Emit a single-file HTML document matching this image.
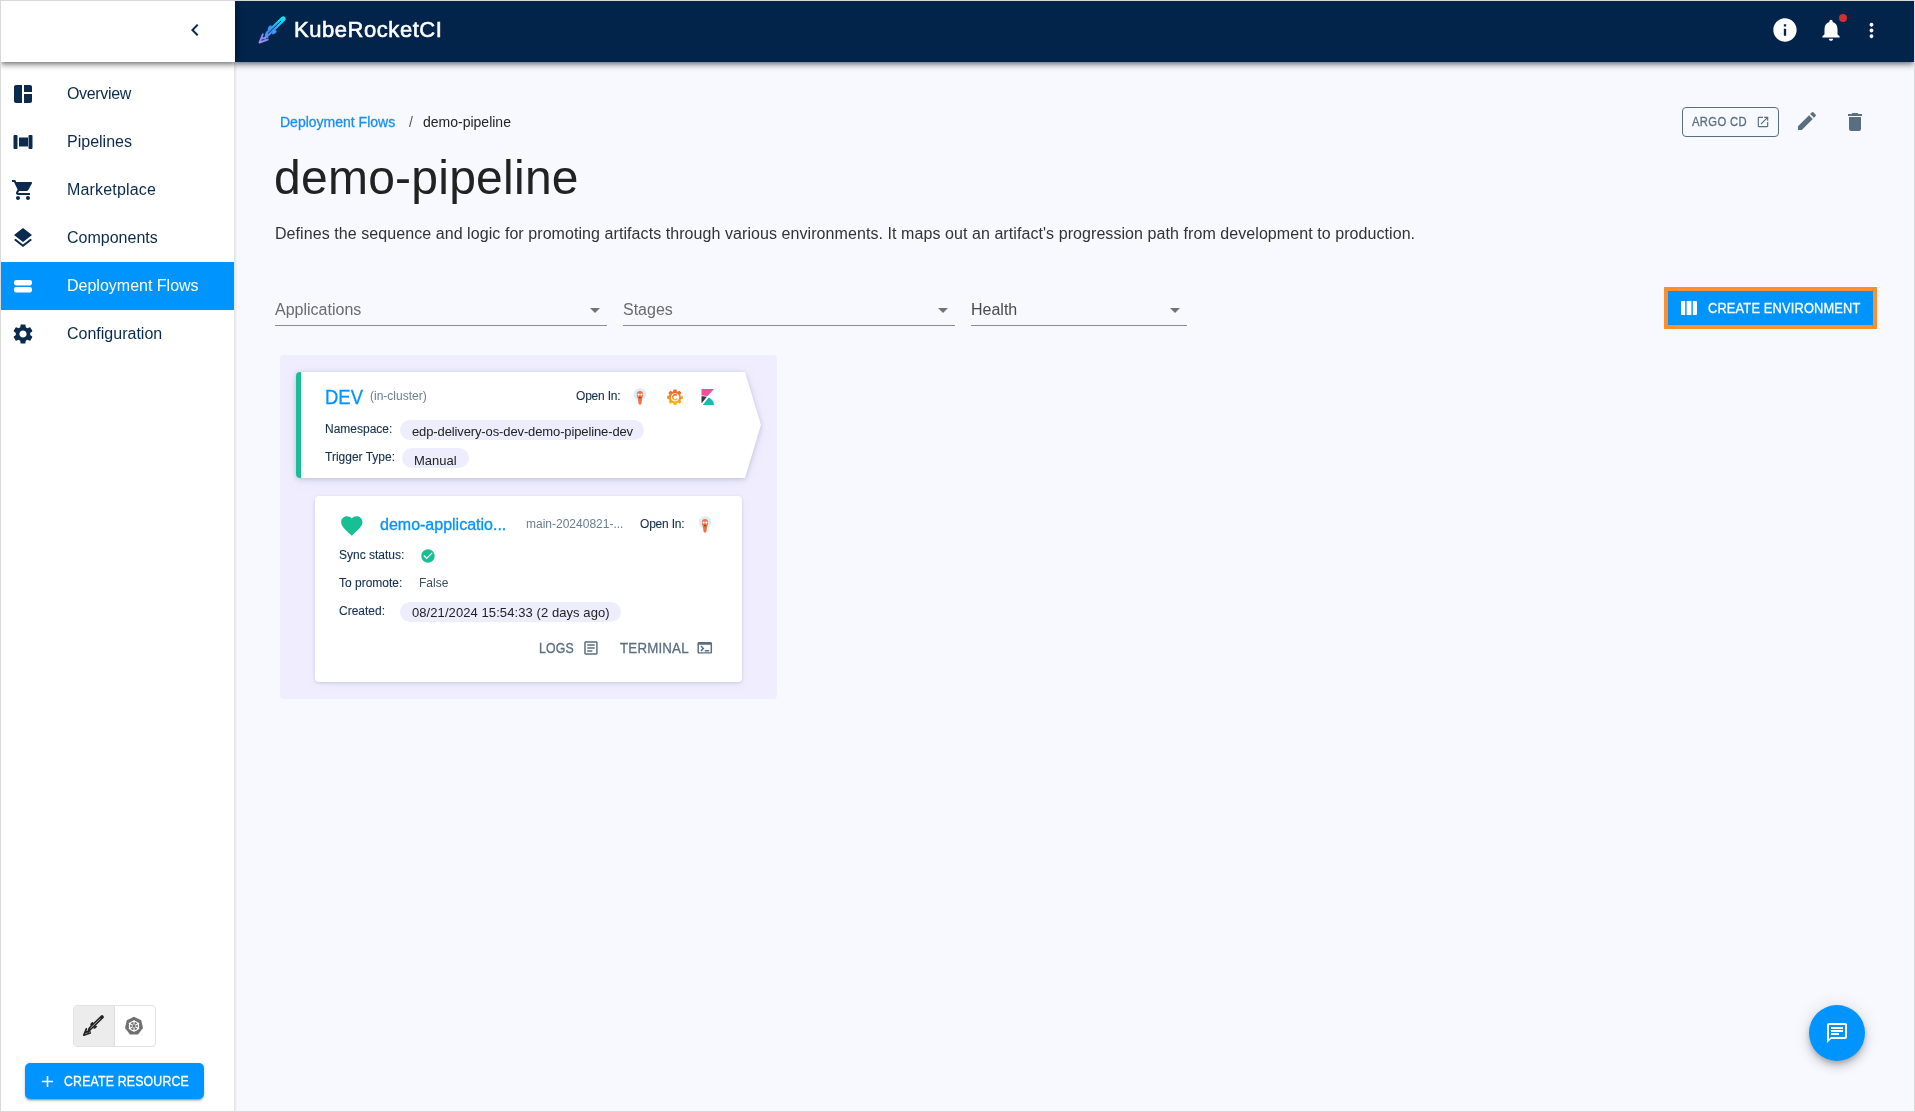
<!DOCTYPE html>
<html><head><meta charset="utf-8">
<style>
*{box-sizing:border-box;margin:0;padding:0}
html,body{width:1915px;height:1112px;overflow:hidden;background:#d9d9d9}
body{font-family:"Liberation Sans",sans-serif;position:relative}
.abs{position:absolute}
#frame{position:absolute;left:1px;top:1px;width:1913px;height:1110px;background:#f7f9fe;overflow:hidden;will-change:transform}
/* sidebar */
#side{position:absolute;left:0;top:0;width:234px;height:1110px;background:#fff;border-right:1px solid #e3e3e3}
#sidehead{position:absolute;left:0;top:0;width:234px;height:61px;background:#fff;box-shadow:0 2px 4px -1px rgba(0,5,20,.38),0 4px 5px 0 rgba(0,5,20,.2),0 1px 10px 0 rgba(0,5,20,.14);z-index:3}
.nav{position:absolute;left:0;width:233px;height:48px;color:#0a2a4e;font-size:16px}
.nav .t{position:absolute;left:66px;top:15px;white-space:nowrap}
.nav svg{position:absolute;left:10px;top:12px;width:24px;height:24px;fill:#0a2a4e}
.nav.active{background:#0094ff;color:#fff}
.nav.active svg{fill:#fff}
/* header */
#hdr{position:absolute;left:234px;top:0;width:1679px;height:61px;background:#02234a;box-shadow:0 2px 4px -1px rgba(0,5,20,.38),0 4px 5px 0 rgba(0,5,20,.2),0 1px 10px 0 rgba(0,5,20,.14);z-index:2}
.tx{position:absolute;white-space:nowrap}
.med{-webkit-text-stroke:0.3px currentColor}
.med2{-webkit-text-stroke:0.12px currentColor}
.chip{position:absolute;border-radius:10px;background:#eeedfd;height:20px}
</style></head>
<body>
<div id="frame">
  <!-- header -->
  <div id="hdr">
    <svg class="abs" style="left:17px;top:9px" width="40" height="40" viewBox="0 0 40 40">
      <defs><linearGradient id="rg" gradientUnits="userSpaceOnUse" x1="8" y1="33" x2="33" y2="7"><stop offset="0" stop-color="#b08cf0"/><stop offset="0.4" stop-color="#3f8cf2"/><stop offset="1" stop-color="#12e8f8"/></linearGradient></defs>
      <line x1="16" y1="23.5" x2="31" y2="9" stroke="url(#rg)" stroke-width="5.2" stroke-linecap="round"/>
      <path d="M31.5 6.8 L33.3 6.9 L33.2 8.8 Z" fill="url(#rg)"/>
      <line x1="16" y1="23.5" x2="29" y2="11" stroke="#02234a" stroke-width="0.9"/>
      <path d="M15.6 19.5 Q16 16 19.2 15.2 L20 17.5 L17.2 20.3 Z" fill="url(#rg)"/>
      <path d="M20.5 24.5 Q24 24 24.8 20.8 L22.5 20 L19.7 22.8 Z" fill="url(#rg)"/>
      <path d="M7.5 32.5 L10.8 24.3 M7.5 32.5 L15.8 29.6 M10.2 28.6 L15.5 27 M14.2 24.5 L13 28.5" stroke="url(#rg)" stroke-width="1.9" stroke-linecap="round" fill="none"/>
    </svg>
    <div class="tx" style="left:59px;top:16px;font-size:22px;color:#fff;letter-spacing:0.55px;-webkit-text-stroke:0.6px #fff">KubeRocketCI</div>
    <svg class="abs" style="left:1536px;top:15px" width="28" height="28" viewBox="0 0 24 24" fill="#fff"><path d="M12 2C6.48 2 2 6.480 2 12s4.48 10 10 10 10-4.48 10-10S17.52 2 12 2zm1 15h-2v-6h2v6zm0-8h-2V7h2v2z"/></svg>
    <svg class="abs" style="left:1583px;top:16px" width="26" height="26" viewBox="0 0 24 24" fill="#fff"><path d="M12 22c1.1 0 2-.9 2-2h-4c0 1.1.89 2 2 2zm6-6v-5c0-3.07-1.64-5.64-4.5-6.32V4c0-.83-.67-1.5-1.5-1.5s-1.5.67-1.5 1.5v.68C7.63 5.36 6 7.920 6 11v5l-2 2v1h16v-1l-2-2z"/></svg>
    <div class="abs" style="left:1604px;top:13px;width:8px;height:8px;border-radius:50%;background:#d32f2f"></div>
    <svg class="abs" style="left:1624.5px;top:18px" width="23" height="23" viewBox="0 0 24 24" fill="#fff"><path d="M12 8c1.1 0 2-.9 2-2s-.9-2-2-2-2 .9-2 2 .9 2 2 2zm0 2c-1.1 0-2 .9-2 2s.9 2 2 2 2-.9 2-2-.9-2-2-2zm0 6c-1.1 0-2 .9-2 2s.9 2 2 2 2-.9 2-2-.9-2-2-2z"/></svg>
  </div>

  <div class="abs" style="left:234px;top:61px;width:2px;height:1049px;background:linear-gradient(90deg,#e9eaef,#f4f4fd)"></div>
  <!-- sidebar -->
  <div id="side">
    <div id="sidehead">
      <svg class="abs" style="left:182px;top:17px" width="24" height="24" viewBox="0 0 24 24" fill="#0a2a4e"><path d="M15.41 7.41L14 6l-6 6 6 6 1.41-1.41L10.83 12z"/></svg>
    </div>
    <div class="nav" style="top:69px"><svg viewBox="0 0 24 24"><path d="M11 21H5c-1.1 0-2-.9-2-2V5c0-1.1.9-2 2-2h6v18zm2 0h6c1.1 0 2-.9 2-2v-7h-8v9zm8-11V5c0-1.1-.9-2-2-2h-6v7h8z"/></svg><span class="t" style="letter-spacing:-0.35px">Overview</span></div>
    <div class="nav" style="top:117px"><svg viewBox="0 0 24 24"><path d="M3.5 5h2a1 1 0 0 1 1 1v12a1 1 0 0 1-1 1h-2a1 1 0 0 1-1-1V6a1 1 0 0 1 1-1zM18.5 5h2a1 1 0 0 1 1 1v12a1 1 0 0 1-1 1h-2a1 1 0 0 1-1-1V6a1 1 0 0 1 1-1zM8 7.5h9v9H8z"/></svg><span class="t">Pipelines</span></div>
    <div class="nav" style="top:165px"><svg viewBox="0 0 24 24"><path d="M7 18c-1.1 0-1.99.9-1.99 2S5.9 22 7 22s2-.9 2-2-.9-2-2-2zM1 2v2h2l3.6 7.59-1.35 2.45c-.16.28-.25.61-.25.96 0 1.1.9 2 2 2h12v-2H7.42c-.14 0-.25-.11-.25-.25l.03-.12.9-1.63h7.45c.75 0 1.41-.41 1.75-1.03l3.58-6.49c.08-.14.12-.31.12-.48 0-.55-.45-1-1-1H5.21l-.94-2H1zm16 16c-1.1 0-1.99.9-1.99 2s.89 2 1.99 2 2-.9 2-2-.9-2-2-2z"/></svg><span class="t" style="letter-spacing:0.18px">Marketplace</span></div>
    <div class="nav" style="top:213px"><svg viewBox="0 0 24 24"><path d="M11.99 18.54l-7.37-5.73L3 14.07l9 7 9-7-1.63-1.27-7.38 5.74zM12 16l7.36-5.73L21 9l-9-7-9 7 1.63 1.27L12 16z"/></svg><span class="t">Components</span></div>
    <div class="nav active" style="top:261px"><svg viewBox="0 0 24 24"><rect x="3" y="6" width="18" height="5.5" rx="2.2"/><rect x="3" y="13" width="18" height="5.5" rx="2.2"/></svg><span class="t">Deployment Flows</span></div>
    <div class="nav" style="top:309px"><svg viewBox="0 0 24 24"><path d="M19.14 12.94c.04-.3.06-.61.06-.94 0-.32-.02-.64-.07-.94l2.03-1.58c.18-.14.23-.41.12-.61l-1.920-3.32c-.12-.22-.37-.29-.59-.22l-2.39.96c-.5-.38-1.03-.7-1.62-.94l-.36-2.54c-.04-.24-.24-.41-.48-.41h-3.84c-.24 0-.43.17-.47.41l-.36 2.54c-.59.24-1.13.57-1.62.94l-2.39-.96c-.22-.08-.47 0-.59.22L2.74 8.87c-.12.21-.08.47.12.61l2.03 1.58c-.05.3-.09.63-.09.94s.02.64.07.94l-2.03 1.58c-.18.14-.23.41-.12.61l1.92 3.32c.12.22.37.29.59.22l2.39-.96c.5.38 1.03.7 1.62.94l.36 2.54c.05.24.24.41.48.41h3.84c.24 0 .44-.17.47-.41l.36-2.54c.59-.24 1.13-.56 1.62-.94l2.39.96c.22.08.47 0 .59-.22l1.92-3.32c.12-.22.07-.47-.12-.61l-2.01-1.58zM12 15.6c-1.98 0-3.6-1.62-3.6-3.6s1.62-3.6 3.6-3.6 3.6 1.62 3.6 3.6-1.62 3.6-3.6 3.6z"/></svg><span class="t">Configuration</span></div>
    <div class="abs" style="left:72px;top:1004px;width:83px;height:42px;border:1px solid #e2e2e2;border-radius:4px;overflow:hidden">
      <div class="abs" style="left:0;top:0;width:41px;height:40px;background:#ececec;border-right:1px solid #dcdcdc"></div>
    </div>
    <svg class="abs" style="left:77px;top:1009px" width="31" height="31" viewBox="0 0 40 40">
      <line x1="16" y1="23.5" x2="31" y2="9" stroke="#222" stroke-width="4.6" stroke-linecap="round"/>
      <line x1="16" y1="23.5" x2="29" y2="11" stroke="#ececec" stroke-width="0.9"/>
      <path d="M15.6 19.5 Q16 16 19.2 15.2 L20 17.5 L17.2 20.3 Z" fill="#222"/>
      <path d="M20.5 24.5 Q24 24 24.8 20.8 L22.5 20 L19.7 22.8 Z" fill="#222"/>
      <path d="M7.5 32.5 L10.8 24.3 M7.5 32.5 L15.8 29.6 M10.2 28.6 L15.5 27 M14.2 24.5 L13 28.5" stroke="#222" stroke-width="2.2" stroke-linecap="round" fill="none"/>
    </svg>
    <svg class="abs" style="left:123px;top:1015px" width="20" height="20" viewBox="0 0 20 20">
      <path d="M10 0.8 L17.2 4.3 L19 12.1 L14 18.4 L6 18.4 L1 12.1 L2.8 4.3 Z" fill="#6f6f6f"/>
      <circle cx="10" cy="10" r="4.6" fill="none" stroke="#fff" stroke-width="1.3"/>
      <path d="M10 4 V16 M4.8 7 L15.2 13 M4.8 13 L15.2 7" stroke="#fff" stroke-width="1.1"/>
      <circle cx="10" cy="10" r="1.4" fill="#6f6f6f"/>
    </svg>
    <div class="abs" style="left:24px;top:1062px;width:179px;height:36px;background:#0094ff;border-radius:5px;box-shadow:0 3px 1px -2px rgba(0,0,0,.2),0 2px 2px 0 rgba(0,0,0,.14),0 1px 5px 0 rgba(0,0,0,.12)"></div>
    <svg class="abs" style="left:37px;top:1071px" width="19" height="19" viewBox="0 0 24 24" fill="#fff"><path d="M19 13h-6v6h-2v-6H5v-2h6V5h2v6h6v2z"/></svg>
    <div class="tx med" style="left:63px;top:1072px;font-size:14px;color:#fff;letter-spacing:0.2px;transform:scaleX(0.88);transform-origin:0 0">CREATE RESOURCE</div>

  </div>


  <div id="main" class="abs" style="left:234px;top:61px;width:1679px;height:1049px">
    <!-- coordinates inside main: image x - 235, image y - 62 -->
    <div class="tx med" style="left:45px;top:52px;font-size:14px;color:#1b8ff5">Deployment Flows</div>
    <div class="tx" style="left:174px;top:52px;font-size:14px;color:#555">/</div>
    <div class="tx" style="left:188px;top:52px;font-size:14px;color:#242424">demo-pipeline</div>
    <div class="tx" style="left:39px;top:88px;font-size:48px;color:#222;letter-spacing:0.25px">demo-pipeline</div>
    <div class="tx" style="left:40px;top:163px;font-size:16px;color:#333;letter-spacing:0.07px">Defines the sequence and logic for promoting artifacts through various environments. It maps out an artifact's progression path from development to production.</div>

    <!-- top right buttons -->
    <div class="abs" style="left:1447px;top:45px;width:97px;height:30px;border:1px solid #5a6e82;border-radius:4px"></div>
    <div class="tx med" style="left:1457px;top:53px;font-size:12.5px;color:#5a6e82;letter-spacing:0.4px;transform:scaleX(0.9);transform-origin:0 0">ARGO CD</div>
    <svg class="abs" style="left:1521px;top:53px" width="14" height="14" viewBox="0 0 24 24" fill="#5a6e82"><path d="M19 19H5V5h7V3H5c-1.11 0-2 .9-2 2v14c0 1.1.89 2 2 2h14c1.1 0 2-.9 2-2v-7h-2v7zM14 3v2h3.59l-9.83 9.83 1.41 1.41L19 6.41V10h2V3h-7z"/></svg>
    <svg class="abs" style="left:1560px;top:47px" width="24" height="24" viewBox="0 0 24 24" fill="#5a6e82"><path d="M3 17.25V21h3.75L17.81 9.94l-3.75-3.75L3 17.25zM20.710 7.04c.39-.39.39-1.02 0-1.41l-2.34-2.34a.9959.9959 0 0 0-1.41 0l-1.83 1.83 3.75 3.75 1.83-1.83z"/></svg>
    <svg class="abs" style="left:1608px;top:48px" width="24" height="24" viewBox="0 0 24 24" fill="#5a6e82"><path d="M6 19c0 1.1.9 2 2 2h8c1.1 0 2-.9 2-2V7H6v12zM19 4h-3.5l-1-1h-5l-1 1H5v2h14V4z"/></svg>

    <!-- filters -->
    <div class="abs" style="left:40px;top:263px;width:332px;height:1px;background:#8c8c8c"></div>
    <div class="tx" style="left:40px;top:239px;font-size:16px;color:#6b6b6b">Applications</div>
    <svg class="abs" style="left:348px;top:236px" width="24" height="24" viewBox="0 0 24 24" fill="#737373"><path d="M7 10l5 5 5-5z"/></svg>
    <div class="abs" style="left:388px;top:263px;width:332px;height:1px;background:#8c8c8c"></div>
    <div class="tx" style="left:388px;top:239px;font-size:16px;color:#6b6b6b">Stages</div>
    <svg class="abs" style="left:696px;top:236px" width="24" height="24" viewBox="0 0 24 24" fill="#737373"><path d="M7 10l5 5 5-5z"/></svg>
    <div class="abs" style="left:736px;top:263px;width:216px;height:1px;background:#8c8c8c"></div>
    <div class="tx" style="left:736px;top:239px;font-size:16px;color:#4a4a4a">Health</div>
    <svg class="abs" style="left:928px;top:236px" width="24" height="24" viewBox="0 0 24 24" fill="#737373"><path d="M7 10l5 5 5-5z"/></svg>

    <!-- create environment -->
    <div class="abs" style="left:1429px;top:225px;width:213px;height:42px;background:#ff8f2e"></div>
    <div class="abs" style="left:1433px;top:229px;width:205px;height:34px;background:#0094ff"></div>
    <svg class="abs" style="left:1446px;top:239px" width="16" height="14" viewBox="0 0 16 14" fill="#fff"><path d="M1 0H4.2V14H1A1 1 0 0 1 0 13V1A1 1 0 0 1 1 0Z"/><rect x="5.6" y="0" width="4.8" height="14"/><path d="M11.8 0H15A1 1 0 0 1 16 1V13A1 1 0 0 1 15 14H11.8Z"/></svg>
    <div class="tx med" style="left:1473px;top:238px;font-size:14px;color:#fff;letter-spacing:0.2px;transform:scaleX(0.915);transform-origin:0 0">CREATE ENVIRONMENT</div>

    <!-- stage container -->
    <div class="abs" style="left:45px;top:293px;width:497px;height:344px;background:#f0eefe;border-radius:4px"></div>

    <!-- stage card (image coords shifted by -235,-62) -->
    <div class="abs" style="left:61px;top:310px;width:465px;height:106px;filter:drop-shadow(0 1px 2px rgba(40,40,90,.18)) drop-shadow(0 2px 6px rgba(60,60,140,.10))">
      <div class="abs" style="left:0;top:0;width:465px;height:106px;background:#fff;clip-path:polygon(0 0,449px 0,465px 53px,449px 106px,0 106px);border-radius:4px"></div>
      <div class="abs" style="left:0;top:0;width:5px;height:106px;background:#18be94;border-radius:4px 0 0 4px"></div>
    </div>
    <div class="tx med" style="left:90px;top:323px;font-size:20.5px;color:#0094ff;transform:scaleX(0.9);transform-origin:0 0">DEV</div>
    <div class="tx" style="left:135px;top:327px;font-size:12px;color:#6a7d90">(in-cluster)</div>
    <div class="tx med2" style="left:341px;top:327px;font-size:12px;color:#14304f;letter-spacing:-0.2px">Open In:</div>
    <svg class="abs" style="left:398px;top:326px" width="14" height="17" viewBox="0 0 14 17"><circle cx="7" cy="6.5" r="6.2" fill="#d9ecf7"/><path d="M3.9 6.2C3.9 4 5.2 3 7 3s3.1 1 3.1 3.2c0 2-.5 3.4-1.1 4.6-.2 1.4-.2 3.2-.5 4.6-.3.8-.9 1.2-1.5 1.2s-1.2-.4-1.5-1.2c-.3-1.4-.3-3.2-.5-4.6C4.4 9.6 3.9 8.2 3.9 6.2z" fill="#ef7245"/><circle cx="5.6" cy="6.6" r="1.1" fill="#fff"/><circle cx="8.4" cy="6.6" r="1.1" fill="#fff"/><ellipse cx="7" cy="9.7" rx=".8" ry=".6" fill="#2b2b2b"/></svg>
    <svg class="abs" style="left:431px;top:326px" width="18" height="18" viewBox="0 0 18 18"><defs><linearGradient id="gf" x1="0" y1="1" x2="0" y2="0"><stop offset="0" stop-color="#fbc11a"/><stop offset="0.5" stop-color="#f7881f"/><stop offset="1" stop-color="#f05a28"/></linearGradient></defs>
      <path d="M7.17 3.38 L7.66 1.51 L10.34 1.51 L10.83 3.38 L11.89 3.82 L13.56 2.85 L15.45 4.74 L14.48 6.41 L14.92 7.47 L16.79 7.96 L16.79 10.64 L14.92 11.13 L14.48 12.19 L15.45 13.86 L13.56 15.75 L11.89 14.78 L10.83 15.22 L10.34 17.09 L7.66 17.09 L7.17 15.22 L6.11 14.78 L4.44 15.75 L2.55 13.86 L3.52 12.19 L3.08 11.13 L1.21 10.64 L1.21 7.96 L3.08 7.47 L3.52 6.41 L2.55 4.74 L4.44 2.85 L6.11 3.82Z" fill="url(#gf)"/>
      <circle cx="9.0" cy="9.3" r="4.1" fill="#fff"/>
      <path d="M10.9 7.4 A2.5 2.5 0 1 0 11.3 10.6" stroke="url(#gf)" stroke-width="1.5" fill="none"/>
      <path d="M14.2 5.2 L16.5 9.4 L14.6 9.0Z" fill="#fff" opacity="0.7"/>
    </svg>
    <svg class="abs" style="left:466px;top:327px" width="14" height="17" viewBox="0 0 14 17"><path d="M0.5 0.1H13L6.4 7.2C4.6 6.6 2.4 6.3 0.5 6.5Z" fill="#f04e98"/><path d="M0.5 7.2C2.3 7 4.2 7.2 5.9 7.8L0.5 14.4Z" fill="#343741"/><path d="M1.8 15.9L7.6 8.6C10.9 9.9 13 12.6 13 15.9Z" fill="#1bbcb1"/></svg>
    <div class="tx med2" style="left:90px;top:360px;font-size:12px;color:#14304f">Namespace:</div>
    <div class="chip" style="left:165px;top:358px;width:244px"></div>
    <div class="tx" style="left:177px;top:362px;font-size:13px;color:#222;letter-spacing:-0.12px">edp-delivery-os-dev-demo-pipeline-dev</div>
    <div class="tx med2" style="left:90px;top:388px;font-size:12px;color:#14304f">Trigger Type:</div>
    <div class="chip" style="left:167px;top:386px;width:67px"></div>
    <div class="tx" style="left:179px;top:390.5px;font-size:13px;color:#222">Manual</div>

    <!-- app card -->
    <div class="abs" style="left:80px;top:434px;width:427px;height:186px;background:#fff;border-radius:4px;box-shadow:0 1px 3px rgba(40,40,90,.14),0 2px 8px rgba(60,60,140,.08)"></div>
    <svg class="abs" style="left:104px;top:451px" width="25.6" height="25.6" viewBox="0 0 24 24" fill="#18be94"><path d="M12 21.35l-1.45-1.32C5.4 15.36 2 12.28 2 8.5 2 5.42 4.42 3 7.5 3c1.74 0 3.41.81 4.5 2.09C13.09 3.81 14.76 3 16.5 3 19.58 3 22 5.42 22 8.5c0 3.78-3.4 6.86-8.55 11.54L12 21.35z"/></svg>
    <div class="tx med" style="left:145px;top:454px;font-size:16px;color:#0094ff">demo-applicatio...</div>
    <div class="tx" style="left:291px;top:455px;font-size:12px;color:#6a7d90">main-20240821-...</div>
    <div class="tx med2" style="left:405px;top:455px;font-size:12px;color:#14304f;letter-spacing:-0.2px">Open In:</div>
    <svg class="abs" style="left:463px;top:454px" width="14" height="17" viewBox="0 0 14 17"><circle cx="7" cy="6.5" r="6.2" fill="#d9ecf7"/><path d="M3.9 6.2C3.9 4 5.2 3 7 3s3.1 1 3.1 3.2c0 2-.5 3.4-1.1 4.6-.2 1.4-.2 3.2-.5 4.6-.3.8-.9 1.2-1.5 1.2s-1.2-.4-1.5-1.2c-.3-1.4-.3-3.2-.5-4.6C4.4 9.6 3.9 8.2 3.9 6.2z" fill="#ef7245"/><circle cx="5.6" cy="6.6" r="1.1" fill="#fff"/><circle cx="8.4" cy="6.6" r="1.1" fill="#fff"/><ellipse cx="7" cy="9.7" rx=".8" ry=".6" fill="#2b2b2b"/></svg>
    <div class="tx med2" style="left:104px;top:486px;font-size:12px;color:#14304f">Sync status:</div>
    <svg class="abs" style="left:185px;top:486px" width="16" height="16" viewBox="0 0 24 24" fill="#18be94"><path d="M12 2C6.48 2 2 6.48 2 12s4.48 10 10 10 10-4.48 10-10S17.52 2 12 2zm-2 15l-5-5 1.41-1.41L10 14.17l7.59-7.59L19 8l-9 9z"/></svg>
    <div class="tx med2" style="left:104px;top:514px;font-size:12px;color:#14304f">To promote:</div>
    <div class="tx" style="left:184px;top:514px;font-size:12px;color:#3a4d63">False</div>
    <div class="tx med2" style="left:104px;top:542px;font-size:12px;color:#14304f">Created:</div>
    <div class="chip" style="left:165px;top:540px;width:221px"></div>
    <div class="tx" style="left:177px;top:543px;font-size:13px;color:#222;letter-spacing:0.08px">08/21/2024 15:54:33 (2 days ago)</div>
    <div class="tx med" style="left:304px;top:578px;font-size:14px;color:#5a6e82;letter-spacing:0.2px;transform:scaleX(0.88);transform-origin:0 0">LOGS</div>
    <svg class="abs" style="left:347px;top:577px" width="17.9" height="17.9" viewBox="0 0 24 24" fill="#5a6e82"><path d="M19 3H5c-1.1 0-2 .9-2 2v14c0 1.1.9 2 2 2h14c1.1 0 2-.9 2-2V5c0-1.1-.9-2-2-2zm0 16H5V5h14v14zM7 7h10v2H7zm0 4h10v2H7zm0 4h7v2H7z"/></svg>
    <div class="tx med" style="left:385px;top:578px;font-size:14px;color:#5a6e82;letter-spacing:0.2px;transform:scaleX(0.95);transform-origin:0 0">TERMINAL</div>
    <svg class="abs" style="left:461px;top:577px" width="17.5" height="17.5" viewBox="0 0 24 24" fill="#5a6e82"><path d="M20 4H4c-1.11 0-2 .9-2 2v12c0 1.1.89 2 2 2h16c1.1 0 2-.9 2-2V6c0-1.1-.89-2-2-2zm0 14H4V8h16v10zm-2-1h-6v-2h6v2zM7.5 17l-1.41-1.41L8.67 13l-2.59-2.59L7.5 9l4 4-4 4z"/></svg>
  </div>


  <div class="abs" style="left:1808px;top:1004px;width:56px;height:56px;border-radius:50%;background:#0094ff;box-shadow:0 3px 5px -1px rgba(0,0,0,.2),0 6px 10px 0 rgba(0,0,0,.14),0 1px 18px 0 rgba(0,0,0,.12);z-index:5"></div>
  <svg class="abs" style="left:1824px;top:1020px;z-index:6" width="24" height="24" viewBox="0 0 24 24" fill="#fff"><path d="M20 2H4c-1.1 0-2 .9-2 2v18l4-4h14c1.1 0 2-.9 2-2V4c0-1.1-.9-2-2-2zm0 14H6l-2 2V4h16v12z"/><path d="M6 6h12v2H6zM6 9h12v2H6zM6 12h8v2H6z"/></svg>
</div>
</body></html>
